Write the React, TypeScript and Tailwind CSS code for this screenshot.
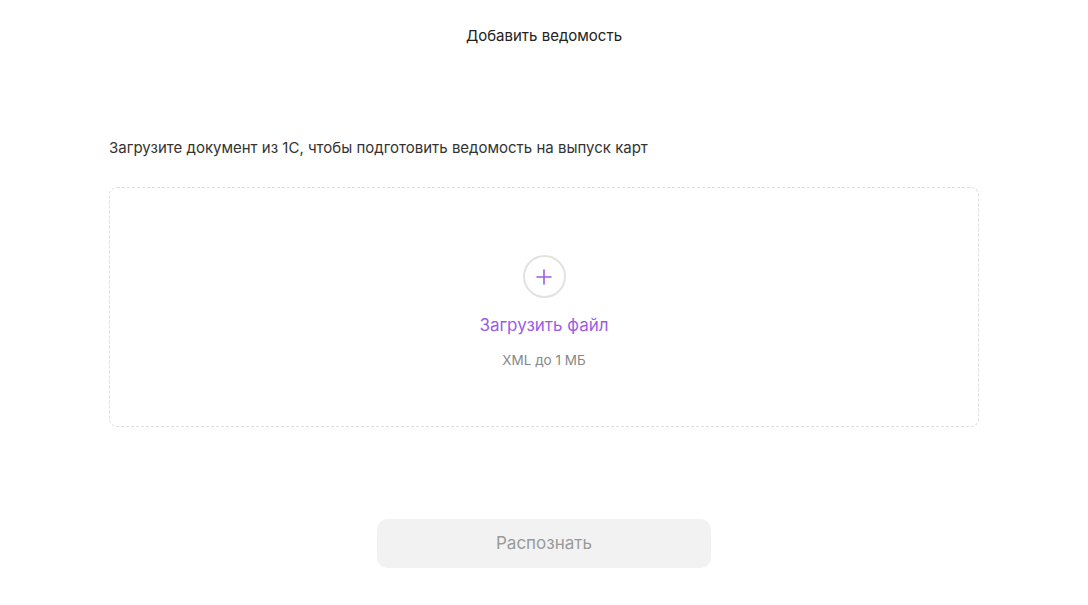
import React from 'react';

const App: React.FC = () => {
  return (
    <div className="min-h-screen bg-white text-[#333] font-['Inter','Noto_Sans',sans-serif]">
      <div className="w-[870px] mx-auto flex flex-col">
        <div className="h-[72px] flex items-center justify-center text-[15px] text-[#222]">
          Добавить ведомость
        </div>

        <p className="mt-[66px] text-[15px] text-[#333] leading-5">
          Загрузите документ из 1С, чтобы подготовить ведомость на выпуск карт
        </p>

        <div className="mt-[29px] h-[240px] rounded-lg border border-dashed border-[#dedede] flex flex-col items-center pt-[67px]">
          <button className="w-[43px] h-[43px] rounded-full border-2 border-[#e2e2e2] flex items-center justify-center">
            <svg width="18" height="18" viewBox="0 0 18 18" fill="none">
              <path d="M9 2v14M2 9h14" stroke="#9b5de5" strokeWidth="1.6" strokeLinecap="round" />
            </svg>
          </button>
          <span className="mt-[17px] text-[17px] text-[#9b5de5] leading-5">Загрузить файл</span>
          <span className="mt-[17px] text-[13.5px] text-[#888] leading-4">XML до 1 МБ</span>
        </div>

        <div className="mt-[92px] flex justify-center">
          <button
            disabled
            className="w-[334px] h-[49px] rounded-[10px] bg-[#f2f2f2] text-[17px] text-[#9a9a9a]"
          >
            Распознать
          </button>
        </div>
      </div>
    </div>
  );
};

export default App;
